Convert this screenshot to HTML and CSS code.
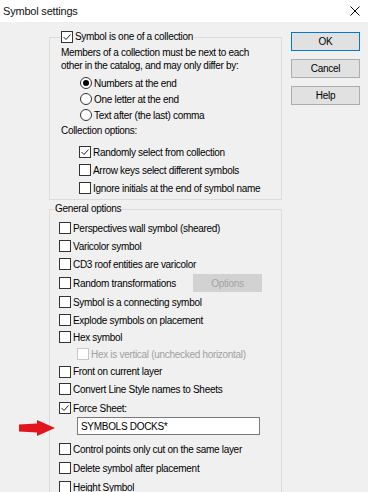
FILE: index.html
```html
<!DOCTYPE html>
<html lang="en">
<head>
    <meta charset="UTF-8">
    <meta name="viewport" content="width=device-width, initial-scale=1.0">
    <title>Symbol settings</title>
    <link rel="stylesheet" href="styles.css">
</head>
<body>
    <div class="titlebar">
        <span class="title">Symbol settings</span>
        <svg class="close" width="10" height="10" viewBox="0 0 10 10">
            <path d="M0.5 0.5 L9.5 9.5 M9.5 0.5 L0.5 9.5" stroke="#000" stroke-width="1" fill="none"/>
        </svg>
    </div>
    <div class="dialog">
        <div class="groups">
            <fieldset class="group collection">
                <legend>
                    <label class="check"><span class="box on"><svg viewBox="0 0 10 10"><polyline points="1.5,5 4,7.5 8.5,2.5"/></svg></span>Symbol is one of a collection</label>
                </legend>
                <p class="note">Members of a collection must be next to each<br>other in the catalog, and may only differ by:</p>
                <div class="radios">
                    <label class="radio"><span class="dot on"></span>Numbers at the end</label>
                    <label class="radio"><span class="dot"></span>One letter at the end</label>
                    <label class="radio"><span class="dot"></span>Text after (the last) comma</label>
                </div>
                <div class="caption">Collection options:</div>
                <div class="suboptions">
                    <label class="check row"><span class="box on"><svg viewBox="0 0 10 10"><polyline points="1.5,5 4,7.5 8.5,2.5"/></svg></span>Randomly select from collection</label>
                    <label class="check row"><span class="box"></span>Arrow keys select different symbols</label>
                    <label class="check row"><span class="box"></span>Ignore initials at the end of symbol name</label>
                </div>
            </fieldset>

            <fieldset class="group general">
                <legend>General options</legend>
                <label class="check row first"><span class="box"></span>Perspectives wall symbol (sheared)</label>
                <label class="check row"><span class="box"></span>Varicolor symbol</label>
                <label class="check row"><span class="box"></span>CD3 roof entities are varicolor</label>
                <div class="row with-button push">
                    <label class="check"><span class="box"></span>Random transformations</label>
                    <button class="btn" disabled>Options</button>
                </div>
                <label class="check row push"><span class="box"></span>Symbol is a connecting symbol</label>
                <label class="check row"><span class="box"></span>Explode symbols on placement</label>
                <label class="check row short"><span class="box"></span>Hex symbol</label>
                <label class="check row indent disabled"><span class="box"></span>Hex is vertical (unchecked horizontal)</label>
                <label class="check row shorter"><span class="box"></span>Front on current layer</label>
                <label class="check row"><span class="box"></span>Convert Line Style names to Sheets</label>
                <label class="check row push"><span class="box on"><svg viewBox="0 0 10 10"><polyline points="1.5,5 4,7.5 8.5,2.5"/></svg></span>Force Sheet:</label>
                <div class="field">
                    <svg class="arrow" width="38" height="16" viewBox="0 0 38 16">
                        <polygon points="1,4.5 19,3.5 19,0 37,8 19,16 19,12.5 1,11.5" fill="#e3141c"/>
                    </svg>
                    <input type="text" value="SYMBOLS DOCKS*">
                </div>
                <label class="check row after-field"><span class="box"></span>Control points only cut on the same layer</label>
                <label class="check row push"><span class="box"></span>Delete symbol after placement</label>
                <label class="check row push"><span class="box"></span>Height Symbol</label>
            </fieldset>
        </div>

        <div class="buttons">
            <button class="btn default">OK</button>
            <button class="btn">Cancel</button>
            <button class="btn">Help</button>
        </div>
    </div>
</body>
</html>
```

FILE: styles.css
```css
html, body {
    margin: 0;
    height: 100%;
    overflow: hidden;
}
body {
    background-color: #f0f0f0;
    font-family: "Liberation Sans", Arial, sans-serif;
    font-size: 10px;
    letter-spacing: -0.3px;
    color: #000;
}
.titlebar {
    height: 22px;
    background: #fff;
    display: flex;
    align-items: center;
    justify-content: space-between;
    padding: 0 8px 0 3px;
}
.title {
    font-family: "Liberation Sans", Arial, sans-serif;
    font-size: 11px;
    letter-spacing: -0.2px;
    color: #111;
}
.close {
    display: block;
}
.dialog {
    display: flex;
    align-items: flex-start;
    gap: 9px;
    padding: 8px 0 0 49px;
}
.groups {
    width: 233px;
    flex: none;
}
.group {
    margin: 0;
    border: 1px solid #dcdcdc;
    min-width: 0;
}
.group legend {
    line-height: 14px;
    height: 14px;
    padding: 0 1px;
}
.collection {
    padding: 0 0 2px 11px;
}
.collection legend {
    margin-left: -1px;
}
.general {
    margin-top: 2px;
    padding: 3px 0 40px 9px;
}
.general legend {
    margin-left: -5px;
}

/* checkboxes and radios */
.check, .radio {
    display: flex;
    align-items: center;
    white-space: nowrap;
}
.box {
    width: 10px;
    height: 10px;
    border: 1px solid #333;
    background: #fff;
    margin-right: 2px;
    flex: none;
    display: flex;
}
.box svg {
    width: 10px;
    height: 10px;
}
.box polyline {
    fill: none;
    stroke: #222;
    stroke-width: 1;
}
.dot {
    width: 10px;
    height: 10px;
    border: 1px solid #333;
    border-radius: 50%;
    background: #fff;
    margin-right: 2px;
    flex: none;
    position: relative;
}
.dot.on::after {
    content: "";
    position: absolute;
    left: 2px;
    top: 2px;
    width: 6px;
    height: 6px;
    border-radius: 50%;
    background: #000;
}
.row {
    height: 18px;
}
.push {
    margin-top: 1px;
}
.short {
    height: 16px;
}
.shorter {
    height: 17px;
}
.indent {
    padding-left: 18px;
}
.disabled {
    color: #a0a0a0;
}
.disabled .box {
    border-color: #c8c8c8;
}

/* collection group */
.note {
    margin: 2px 0 0;
    line-height: 13px;
}
.radios {
    margin-top: 3px;
    padding-left: 19px;
}
.radio {
    height: 16px;
}
.caption {
    height: 16px;
    line-height: 16px;
}
.suboptions {
    margin-top: 4px;
    padding-left: 18px;
}

/* general group */
.with-button {
    display: grid;
    grid-template-columns: 134px 69px;
    align-items: center;
}
.field {
    position: relative;
    margin-left: 18px;
}
.field input[type="text"] {
    display: block;
    box-sizing: border-box;
    width: 183px;
    height: 18px;
    margin: 0;
    padding: 0 3px;
    border: 1px solid #7a7a7a;
    background: #fff;
    font-family: inherit;
    font-size: 10px;
    letter-spacing: -0.3px;
    color: #000;
}
.arrow {
    position: absolute;
    left: -59px;
    top: 3px;
}
.after-field {
    margin-top: 5px;
}

/* push buttons */
.buttons {
    display: flex;
    flex-direction: column;
    gap: 8px;
    margin-top: 2px;
}
.btn {
    box-sizing: border-box;
    width: 69px;
    height: 19px;
    padding: 0;
    background-color: #e1e1e1;
    border: 1px solid #adadad;
    font-family: inherit;
    font-size: 10px;
    letter-spacing: -0.3px;
    color: #000;
}
.btn.default {
    border-color: #0078d7;
}
.btn:disabled {
    background-color: #d2d2d2;
    border-color: #d2d2d2;
    color: #a3a3a3;
    height: 18px;
}
```
